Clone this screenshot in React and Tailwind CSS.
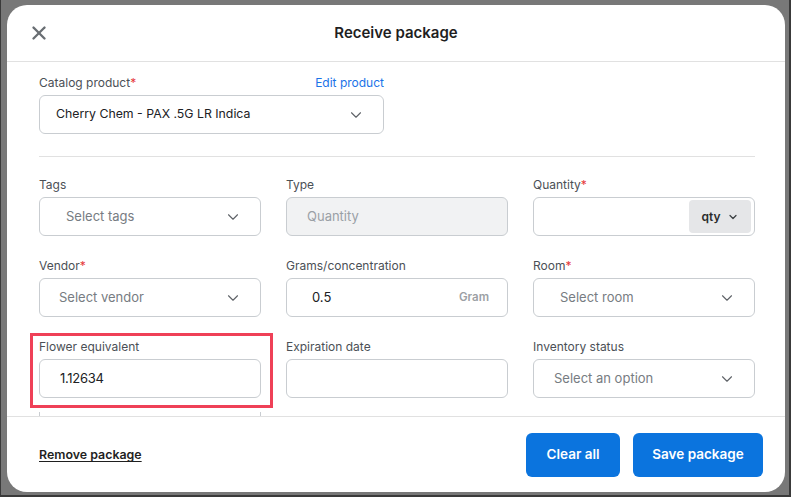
import { X, ChevronDown } from 'lucide-react';

function Label({ children, required }) {
  return (
    <div className="h-4 mb-[4px] text-[12px] leading-4 text-[#4b5056]">
      {children}
      {required && <span className="text-[#e5383b]">*</span>}
    </div>
  );
}

function SelectBox({ placeholder, pl = 'pl-[26px]' }) {
  return (
    <div className={`h-[39px] rounded-md border border-[#c9cdd1] bg-white flex items-center justify-between ${pl} pr-[18px]`}>
      <span className="text-[13px] text-[#777c82]">{placeholder}</span>
      <ChevronDown size={18} strokeWidth={1.5} className="text-[#5f6368]" />
    </div>
  );
}

export default function App() {
  return (
    <div
      className="w-[791px] h-[497px] bg-[#787878] border-r-2 border-b-2 border-l border-[#3a3a3a] pl-[6px] pt-[5px] overflow-hidden"
      style={{ fontFamily: 'Inter, "Noto Sans", sans-serif' }}
    >
      <div className="relative w-[778px] h-[487px] bg-white rounded-[20px] flex flex-col overflow-hidden">
        {/* header */}
        <div className="h-[57px] shrink-0 border-b border-[#e1e1e1] relative flex items-center justify-center">
          <X size={22} strokeWidth={2.6} className="absolute left-[21px] top-[17px] text-[#696e73]" />
          <h1 className="text-[15px] font-semibold text-[#1f1f1f]">Receive package</h1>
        </div>

        {/* body */}
        <div className="flex-1 overflow-hidden pl-8 pr-[30px] pt-[13px]">
          <div className="w-[345px]">
            <div className="flex justify-between items-center h-4 mb-[4px]">
              <div className="text-[12px] text-[#4b5056]">
                Catalog product<span className="text-[#e5383b]">*</span>
              </div>
              <a className="text-[12px] text-[#1a73e8]">Edit product</a>
            </div>
            <div className="h-[39px] rounded-md border border-[#c9cdd1] flex items-center justify-between pl-4 pr-[18px]">
              <span className="text-[12.3px] text-[#202124]">Cherry Chem - PAX .5G LR Indica</span>
              <ChevronDown size={18} strokeWidth={1.5} className="text-[#5f6368]" />
            </div>
          </div>

          <div className="h-px bg-[#e1e1e1] mt-[22px] mb-[20px]" />

          <div className="grid grid-cols-3 gap-x-[25px] gap-y-[22px] w-[716px]">
            <div>
              <Label>Tags</Label>
              <SelectBox placeholder="Select tags" />
            </div>
            <div>
              <Label>Type</Label>
              <div className="h-[39px] rounded-md border border-[#c9cdd1] bg-[#f1f2f3] flex items-center pl-5">
                <span className="text-[13px] text-[#9aa0a6]">Quantity</span>
              </div>
            </div>
            <div>
              <Label required>Quantity</Label>
              <div className="h-[39px] rounded-md border border-[#c9cdd1] flex items-center justify-end pr-[3px]">
                <div className="h-[33px] w-[62px] rounded bg-[#e5e6e8] flex items-center justify-center gap-[6px]">
                  <span className="text-[12px] font-semibold text-[#2b2b2b]">qty</span>
                  <ChevronDown size={12} strokeWidth={2.5} className="text-[#3c4043]" />
                </div>
              </div>
            </div>

            <div>
              <Label required>Vendor</Label>
              <SelectBox placeholder="Select vendor" pl="pl-[19px]" />
            </div>
            <div>
              <Label>Grams/concentration</Label>
              <div className="h-[39px] rounded-md border border-[#c9cdd1] flex items-center justify-between pl-[25px] pr-[18px]">
                <span className="text-[13px] text-[#202124]">0.5</span>
                <span className="text-[11.5px] font-semibold text-[#9ca0a4]">Gram</span>
              </div>
            </div>
            <div>
              <Label required>Room</Label>
              <SelectBox placeholder="Select room" />
            </div>

            <div>
              <Label>Flower equivalent</Label>
              <div className="h-[39px] rounded-md border border-[#c9cdd1] flex items-center pl-5">
                <span className="text-[13px] text-[#202124] tracking-[-0.3px]">1.12634</span>
              </div>
            </div>
            <div>
              <Label>Expiration date</Label>
              <div className="h-[39px] rounded-md border border-[#c9cdd1]" />
            </div>
            <div>
              <Label>Inventory status</Label>
              <SelectBox placeholder="Select an option" pl="pl-5" />
            </div>

            <div className="-mt-[8px] h-6 border-x border-[#c9cdd1]" />
          </div>
        </div>

        {/* footer */}
        <div className="h-[76px] shrink-0 border-t border-[#e1e1e1] flex items-center justify-between pl-8 pr-[22px]">
          <button className="text-[12.4px] font-semibold text-[#1f1f1f] underline underline-offset-2 mt-[2px]">Remove package</button>
          <div className="flex gap-[13px]">
            <button className="h-[44px] w-[94px] rounded-md bg-[#0b74de] text-white text-[13.5px] font-semibold">Clear all</button>
            <button className="h-[44px] w-[130px] rounded-md bg-[#0b74de] text-white text-[13.5px] font-semibold">Save package</button>
          </div>
        </div>

        {/* highlight annotation */}
        <div className="absolute left-[23px] top-[328px] w-[243px] h-[75px] border-[3px] border-[#ef4057] pointer-events-none" />
      </div>
    </div>
  );
}
